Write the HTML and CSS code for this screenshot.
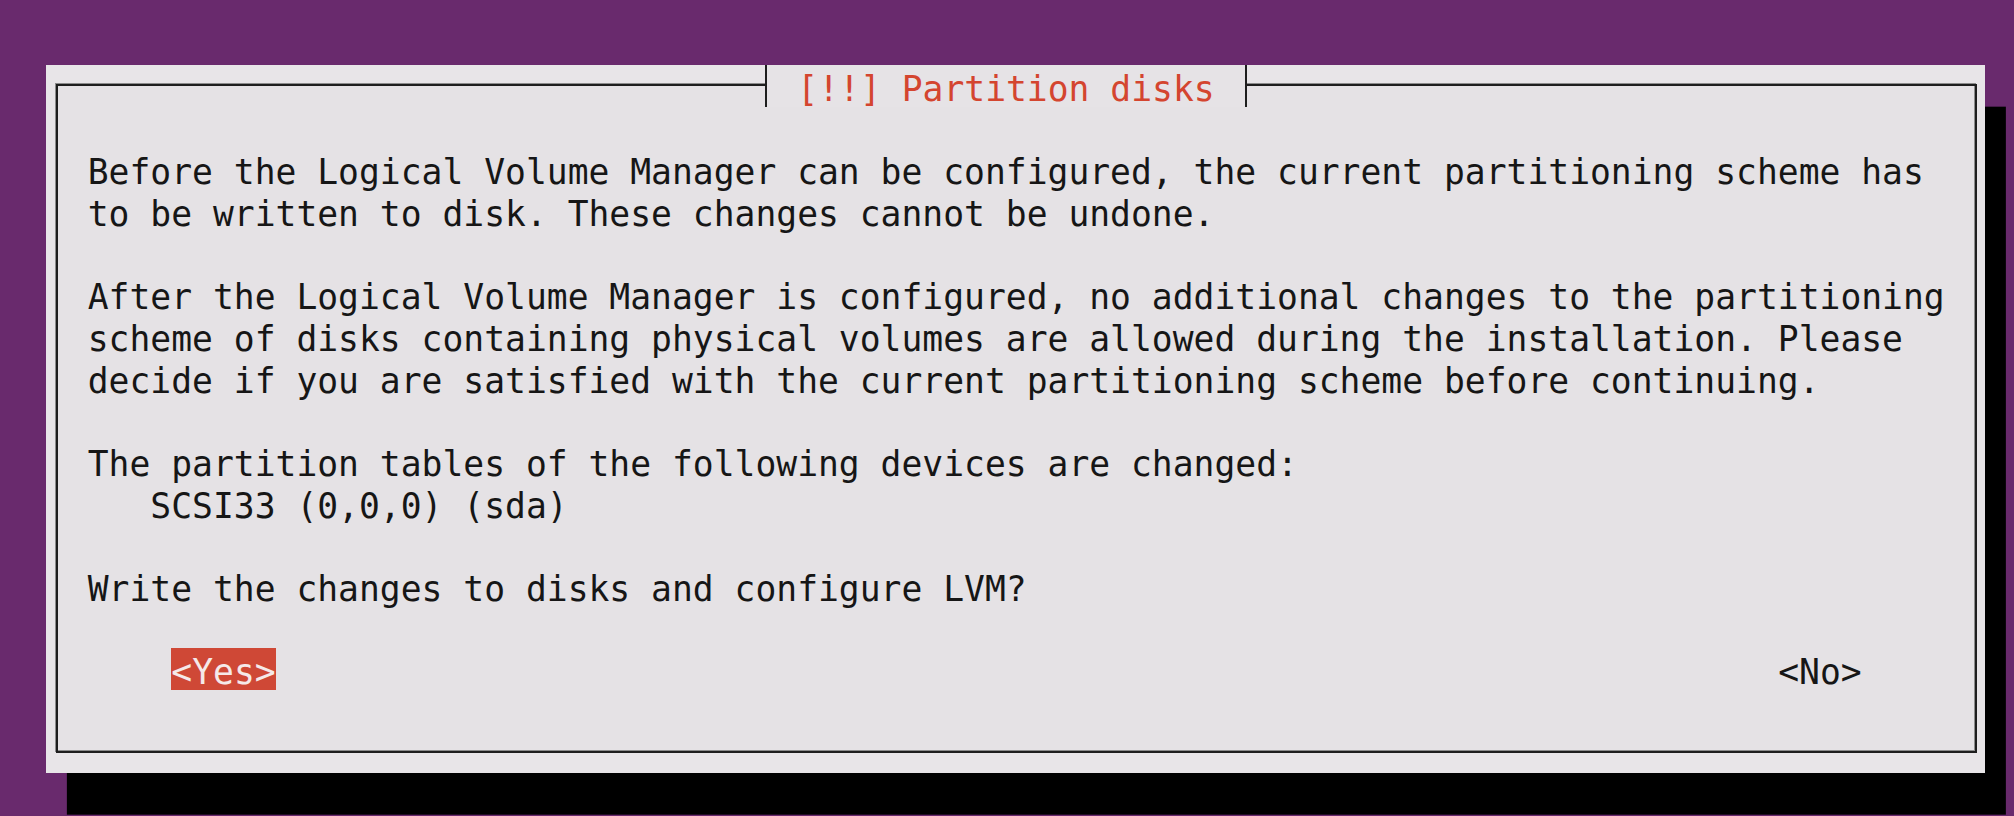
FILE: index.html
```html
<!DOCTYPE html>
<html lang="en">
<head>
<meta charset="utf-8">
<title>[!!] Partition disks</title>
<link rel="stylesheet" href="styles.css">
</head>
<body>
<div class="screen">
  <div class="dialog">
    <div class="frame">
      <div class="title-row"><h1 class="title">[!!] Partition disks</h1></div>
      <div class="content">
        <p class="para">Before the Logical Volume Manager can be configured, the current partitioning scheme has<br>to be written to disk. These changes cannot be undone.</p>
        <p class="para">After the Logical Volume Manager is configured, no additional changes to the partitioning<br>scheme of disks containing physical volumes are allowed during the installation. Please<br>decide if you are satisfied with the current partitioning scheme before continuing.</p>
        <p class="para">The partition tables of the following devices are changed:<br>   SCSI33 (0,0,0) (sda)</p>
        <p class="para">Write the changes to disks and configure LVM?</p>
      </div>
      <div class="buttons">
        <span class="btn btn-active">&lt;Yes&gt;</span>
        <span class="btn">&lt;No&gt;</span>
      </div>
    </div>
  </div>
</div>
</body>
</html>
```
FILE: styles.css
```css
html, body {
  margin: 0;
  height: 100%;
}

body {
  background: #692a6d;
  font-family: "DejaVu Sans Mono", "Liberation Mono", monospace;
  font-size: 34.67px;
  color: #161616;
  overflow: hidden;
}

.screen {
  padding: 65px 0 0 46px;
}

.dialog {
  width: 1939px;
  box-sizing: border-box;
  padding: 19px 8px 20.67px 10px;
  background: #e8e5e8;
  box-shadow: 20.87px 41.67px 0 #000;
}

.frame {
  border: 2px solid #1e1e1e;
  background: #e5e2e5;
  padding-bottom: 60.67px;
  box-shadow: -1px -1px 0 #8c8c8c, inset -1px -1px 0 #8c8c8c;
}

.title-row {
  display: flex;
  justify-content: center;
  margin-top: -21px;
  height: 41.67px;
}

.title {
  margin: 0 21px 0 0;
  font: inherit;
  font-weight: normal;
  color: #d4452f;
  background: #e6e3e6;
  border-left: 2px solid #1e1e1e;
  border-right: 2px solid #1e1e1e;
  padding: 8px 30.3px 0;
  line-height: 33.67px;
  height: 41.67px;
  box-sizing: border-box;
  white-space: pre;
}

.content {
  padding: 45.67px 0 37.67px 29.74px;
}

.para {
  margin: 0 0 41.67px;
  line-height: 41.67px;
  white-space: pre;
}

.para:last-child {
  margin-bottom: 0;
}

.buttons {
  display: flex;
  justify-content: space-between;
  padding: 0 113.3px;
}

.btn {
  display: block;
  height: 41.67px;
  box-sizing: border-box;
  padding-top: 8px;
  line-height: 33.67px;
  white-space: pre;
}

.btn-active {
  background: #cf4836;
  color: #f5e9e9;
}
```
